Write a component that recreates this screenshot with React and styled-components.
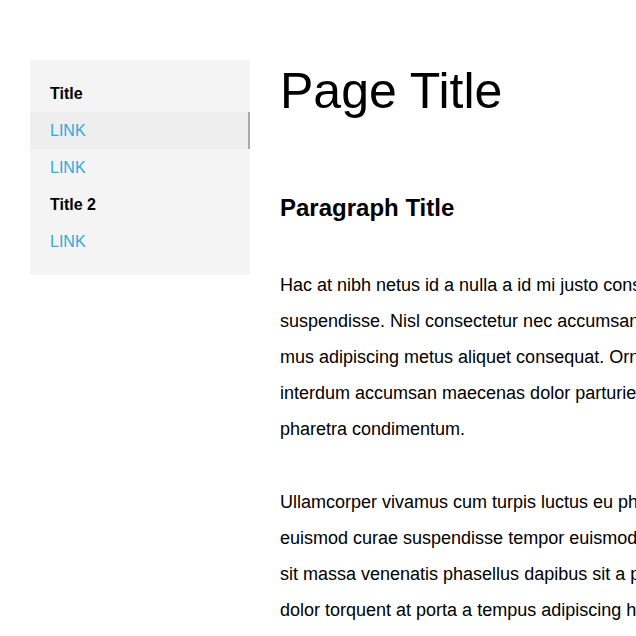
import React from "react";
import styled, { createGlobalStyle } from "styled-components";

const Global = createGlobalStyle`
  html, body { margin: 0; padding: 0; background: #fff; overflow: hidden; }
  body { font-family: "Liberation Sans", Arial, sans-serif; color: #000; }
`;

const Page = styled.div`
  display: flex;
  align-items: flex-start;
  gap: 30px;
  padding: 60px 0 0 30px;
  width: 1200px;
`;

const Sidebar = styled.nav`
  flex: 0 0 220px;
  background: #f4f4f4;
  padding: 15px 0;
  display: flex;
  flex-direction: column;
`;

const NavTitle = styled.div`
  padding: 0 20px;
  height: 37px;
  line-height: 37px;
  font-size: 16px;
  font-weight: bold;
`;

const NavLink = styled.a`
  display: block;
  padding: 0 20px;
  height: 37px;
  line-height: 37px;
  font-size: 16px;
  color: #29abe2;
  text-decoration: none;
  background: ${(p) => (p.$active ? "#eeeeee" : "transparent")};
  box-shadow: ${(p) => (p.$active ? "inset -2px 0 0 #aaaaaa" : "none")};
`;

const Main = styled.main`
  flex: 1;
`;

const H1 = styled.h1`
  margin: 2px 0 0;
  font-size: 50px;
  font-weight: normal;
  line-height: 58px;
`;

const H2 = styled.h2`
  margin: 74px 0 0;
  font-size: 24px;
  font-weight: bold;
  line-height: 28px;
`;

const P = styled.p`
  margin: ${(p) => (p.$first ? "45px" : "37px")} 0 0;
  font-size: 18px;
  line-height: 36px;
  white-space: nowrap;
`;

const para1 = [
  "Hac at nibh netus id a nulla a id mi justo consequat sed et elit at",
  "suspendisse. Nisl consectetur nec accumsan tincidunt vitae nisi ridiculus",
  "mus adipiscing metus aliquet consequat. Ornare a est vestibulum purus",
  "interdum accumsan maecenas dolor parturient sagittis nascetur curabitur",
  "pharetra condimentum.",
];

const para2 = [
  "Ullamcorper vivamus cum turpis luctus eu pharetra sit quam a urna",
  "euismod curae suspendisse tempor euismod feugiat a vestibulum morbi",
  "sit massa venenatis phasellus dapibus sit a parturient rutrum tempor",
  "dolor torquent at porta a tempus adipiscing habitant consectetur nec",
];

const Lines = ({ lines }) =>
  lines.map((l, i) => (
    <React.Fragment key={i}>
      {l}
      {i < lines.length - 1 && <br />}
    </React.Fragment>
  ));

export default function App() {
  return (
    <>
      <Global />
      <Page>
        <Sidebar>
          <NavTitle>Title</NavTitle>
          <NavLink href="#" $active>LINK</NavLink>
          <NavLink href="#">LINK</NavLink>
          <NavTitle>Title 2</NavTitle>
          <NavLink href="#">LINK</NavLink>
        </Sidebar>
        <Main>
          <H1>Page Title</H1>
          <H2>Paragraph Title</H2>
          <P $first><Lines lines={para1} /></P>
          <P><Lines lines={para2} /></P>
        </Main>
      </Page>
    </>
  );
}
